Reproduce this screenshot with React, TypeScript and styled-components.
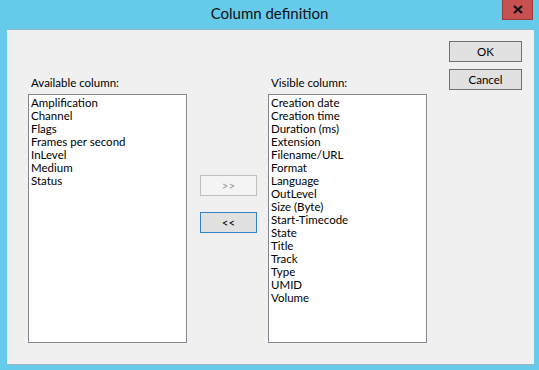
import React from "react";
import styled, { createGlobalStyle } from "styled-components";

const Global = createGlobalStyle`
  html, body { margin: 0; padding: 0; background: #66cbea; }
  * { box-sizing: border-box; }
`;

const UI_FONT = `"Segoe UI", Lato, "Liberation Sans", sans-serif`;

const Window = styled.div`
  width: 539px;
  height: 370px;
  background: #66cbea;
  display: flex;
  flex-direction: column;
  font-family: ${UI_FONT};
  color: #000;
`;

const TitleBar = styled.div`
  height: 29px;
  display: grid;
  grid-template-columns: 1fr auto 1fr;
  align-items: start;
`;

const Title = styled.div`
  grid-column: 2;
  font-size: 15px;
  line-height: 27px;
  color: #111;
`;

const CloseButton = styled.button`
  grid-column: 3;
  justify-self: end;
  margin-right: 6px;
  width: 31px;
  height: 20px;
  padding: 0;
  border: 1px solid #9a3a3a;
  border-top: none;
  background: #c75050;
  display: flex;
  align-items: center;
  justify-content: center;
`;

const Client = styled.div`
  flex: 1;
  margin: 0 5px 5px 7px;
  background: #f0f0f0;
  border-top: 1px solid #8fb8ca;
  border-bottom: 1px solid #9fb3bc;
  display: flex;
  align-items: flex-start;
  padding-left: 21px;
  font-size: 11.5px;
`;

const ListColumn = styled.div<{ $gap: number }>`
  margin-left: ${(p) => p.$gap}px;
  width: 159px;
  padding-top: 45px;
  display: flex;
  flex-direction: column;
`;

const Label = styled.div`
  height: 15px;
  line-height: 15px;
  padding-left: 3px;
  color: #000;
`;

const ListBox = styled.div`
  margin-top: 4px;
  height: 249px;
  background: #fff;
  border: 1px solid #828790;
  padding: 1px 2px;
`;

const Item = styled.div`
  line-height: 13px;
  height: 13px;
  white-space: nowrap;
`;

const MoveColumn = styled.div`
  margin-left: 13px;
  width: 57px;
  padding-top: 145px;
  display: flex;
  flex-direction: column;
  gap: 16px;
`;

const ActionColumn = styled.div`
  margin-left: 22px;
  width: 73px;
  padding-top: 11px;
  display: flex;
  flex-direction: column;
  gap: 7px;
`;

const Button = styled.button<{ $variant?: "default" | "disabled" | "focused" }>`
  height: 21px;
  width: 100%;
  padding: 0;
  font-family: ${UI_FONT};
  font-size: 11.5px;
  line-height: 19px;
  background: ${(p) => (p.$variant === "disabled" ? "#f4f4f4" : "#e1e1e1")};
  border: 1px solid
    ${(p) =>
      p.$variant === "disabled"
        ? "#bfbfbf"
        : p.$variant === "focused"
        ? "#3383c9"
        : "#707070"};
  color: ${(p) => (p.$variant === "disabled" ? "#9a9a9a" : "#000")};
`;

const available = [
  "Amplification",
  "Channel",
  "Flags",
  "Frames per second",
  "InLevel",
  "Medium",
  "Status",
];

const visible = [
  "Creation date",
  "Creation time",
  "Duration (ms)",
  "Extension",
  "Filename/URL",
  "Format",
  "Language",
  "OutLevel",
  "Size (Byte)",
  "Start-Timecode",
  "State",
  "Title",
  "Track",
  "Type",
  "UMID",
  "Volume",
];

export default function App() {
  return (
    <>
      <Global />
      <Window>
        <TitleBar>
          <Title>Column definition</Title>
          <CloseButton aria-label="Close">
            <svg width="10" height="9" viewBox="0 0 10 9">
              <path d="M1 1 L9 8 M9 1 L1 8" stroke="#111" strokeWidth="2.2" />
            </svg>
          </CloseButton>
        </TitleBar>
        <Client>
          <ListColumn $gap={0}>
            <Label>Available column:</Label>
            <ListBox>
              {available.map((t) => (
                <Item key={t}>{t}</Item>
              ))}
            </ListBox>
          </ListColumn>
          <MoveColumn>
            <Button $variant="disabled">&gt;&gt;</Button>
            <Button $variant="focused">&lt;&lt;</Button>
          </MoveColumn>
          <ListColumn $gap={11}>
            <Label>Visible column:</Label>
            <ListBox>
              {visible.map((t) => (
                <Item key={t}>{t}</Item>
              ))}
            </ListBox>
          </ListColumn>
          <ActionColumn>
            <Button>OK</Button>
            <Button>Cancel</Button>
          </ActionColumn>
        </Client>
      </Window>
    </>
  );
}
